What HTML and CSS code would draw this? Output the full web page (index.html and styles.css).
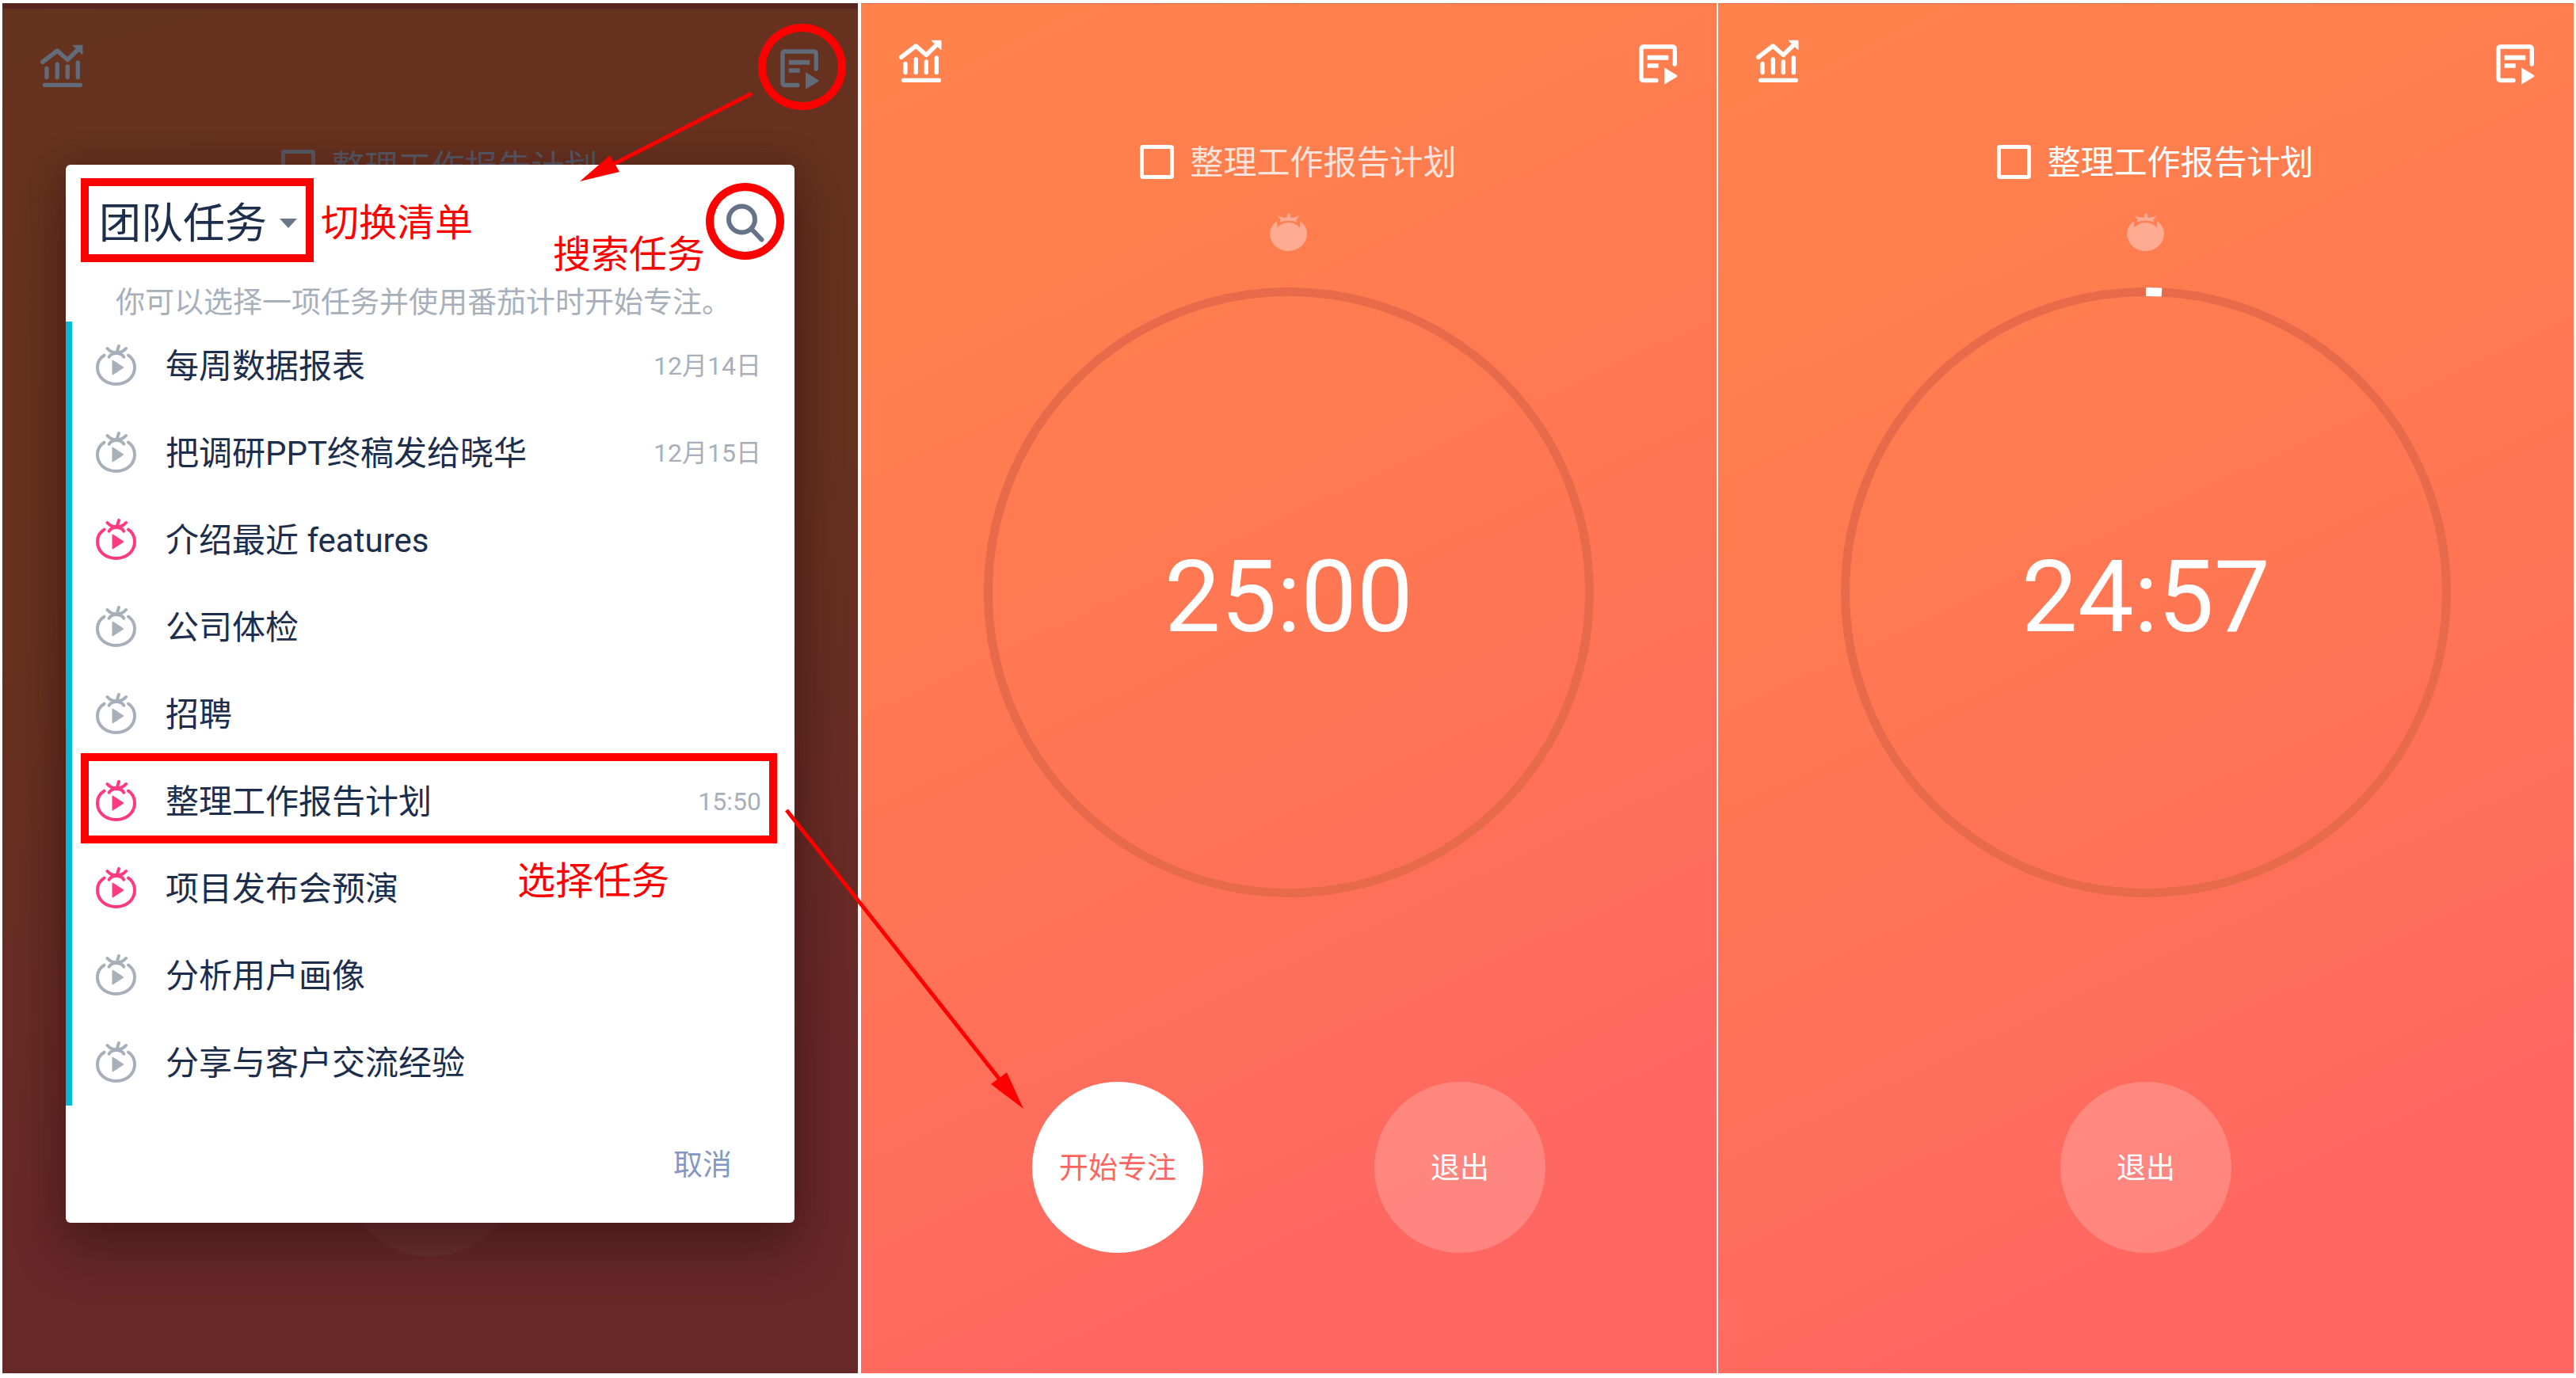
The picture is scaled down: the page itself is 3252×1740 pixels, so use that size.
FILE: index.html
```html
<!DOCTYPE html>
<html lang="zh-CN">
<head>
<meta charset="utf-8">
<meta name="viewport" content="width=device-width, initial-scale=1">
<title>番茄计时</title>
<link rel="stylesheet" href="styles.css">
</head>
<body>
<svg class="sprite" aria-hidden="true">
  <symbol id="i-chart" viewBox="0 0 64 64">
    <path d="M8.7 26.3 27.3 12 40.3 23.5 53 11" fill="none" stroke="currentColor" stroke-width="5.5" stroke-linecap="round" stroke-linejoin="round"/>
    <path d="M47 5.3h12V17z" fill="currentColor" stroke="currentColor" stroke-linejoin="round"/>
    <path d="M14 34.500v11M27.300 29v16.500M40.300 32v13.500M53.300 27v18.500M11.500 55.300h45" fill="none" stroke="currentColor" stroke-width="5.300" stroke-linecap="round"/>
  </symbol>
  <symbol id="i-tasks" viewBox="0 0 64 64">
    <path d="M53.300 35V16q0-3-3-3H14q-3 0-3 3v36.500q0 3 3 3h16" fill="none" stroke="currentColor" stroke-width="5.300" stroke-linecap="round"/>
    <path d="M18.700 23.700h26.600v6H18.700zM18.700 34.300h14v5.400h-14zM40 40.500q0-1.500 1.300-.6l14.700 9.200q1 .9 0 1.800l-14.700 9.200q-1.300.9-1.300-.6z" fill="currentColor"/>
  </symbol>
  <symbol id="i-pomo" viewBox="0 0 52 52">
    <g fill="none" stroke="currentColor" stroke-width="4" stroke-linecap="round">
      <path d="M10.500 13.700C5 17 2 23 2 29c0 12 10 21 23.500 21S49 41 49 29c0-6-3-12-8-15.300"/>
      <path d="M14.500 5c3 3.500 6.500 5.200 11.500 5.200S35 8.500 38 5M29 2l-2.500 8M16.700 15.700C18.500 12.500 22 11 26 11s7.500 1.500 9.300 4.700"/>
    </g>
    <path d="M20.500 20.200q0-1.300 1.200-.5l13 8.500q1 .8 0 1.600l-13 8.500q-1.200.8-1.200-.5z" fill="currentColor"/>
  </symbol>
  <symbol id="i-tomato" viewBox="0 0 48 48">
    <path d="M9 9.300C3.500 13 .3 18.500.3 25 .3 37.500 11 47 23.500 47S47 37.500 47 25c0-6.500-3.200-12-9-15.700v8.200c-3.500-4-9-6.500-14.500-6.500S13 13.500 9.500 17.500z" fill="currentColor"/>
    <path d="M10 2c3 2 7 3 11.500 2.800L22.500 0H26l.5 4.800C30 5 34 4 37 2c-.8 2.500-2.300 4.500-4 5.800L35 11c-3.500-1.500-7.500-2.300-11.500-2.300S15.500 9.500 12 11l2-3.500C12.200 6 10.700 4.300 10 2z" fill="currentColor"/>
  </symbol>
  <symbol id="i-search" viewBox="0 0 48 50">
    <path d="M36 20a16.500 16.500 0 1 1-33 0 16.500 16.500 0 0 1 33 0zM31.500 32 44.500 45.500" fill="none" stroke="currentColor" stroke-width="6" stroke-linecap="round"/>
  </symbol>
</svg>

<main class="board">
  <section class="phone phone-dim">
    <header class="topbar">
      <button class="icon-btn" aria-label="统计"><svg class="icon"><use href="#i-chart"/></svg></button>
      <button class="icon-btn" aria-label="任务列表"><svg class="icon"><use href="#i-tasks"/></svg></button>
    </header>
    <label class="task"><input class="check" type="checkbox"><span class="task-text">整理工作报告计划</span></label>
    <div class="actions"><span class="halo"></span></div>

    <div class="dialog" role="dialog" aria-label="选择任务">
      <div class="dialog-head">
        <div class="list-pick">
          <select class="list-select" aria-label="清单"><option>团队任务</option></select>
          <span class="caret"></span>
        </div>
        <button class="search-btn" aria-label="搜索任务"><svg class="search-icon"><use href="#i-search"/></svg></button>
      </div>
      <p class="hint">你可以选择一项任务并使用番茄计时开始专注。</p>
      <ul class="rows">
        <li class="row"><svg class="pomo"><use href="#i-pomo"/></svg><span class="name">每周数据报表</span><time class="date">12月14日</time></li>
        <li class="row"><svg class="pomo"><use href="#i-pomo"/></svg><span class="name">把调研PPT终稿发给晓华</span><time class="date">12月15日</time></li>
        <li class="row"><svg class="pomo hot"><use href="#i-pomo"/></svg><span class="name">介绍最近 features</span></li>
        <li class="row"><svg class="pomo"><use href="#i-pomo"/></svg><span class="name">公司体检</span></li>
        <li class="row"><svg class="pomo"><use href="#i-pomo"/></svg><span class="name">招聘</span></li>
        <li class="row"><svg class="pomo hot"><use href="#i-pomo"/></svg><span class="name">整理工作报告计划</span><time class="date">15:50</time></li>
        <li class="row"><svg class="pomo hot"><use href="#i-pomo"/></svg><span class="name">项目发布会预演</span></li>
        <li class="row"><svg class="pomo"><use href="#i-pomo"/></svg><span class="name">分析用户画像</span></li>
        <li class="row"><svg class="pomo"><use href="#i-pomo"/></svg><span class="name">分享与客户交流经验</span></li>
      </ul>
      <div class="dialog-foot"><button class="cancel">取消</button></div>
    </div>
  </section>

  <section class="phone">
    <header class="topbar">
      <button class="icon-btn" aria-label="统计"><svg class="icon"><use href="#i-chart"/></svg></button>
      <button class="icon-btn" aria-label="任务列表"><svg class="icon"><use href="#i-tasks"/></svg></button>
    </header>
    <label class="task task-soft"><input class="check" type="checkbox"><span class="task-text">整理工作报告计划</span></label>
    <svg class="tomato"><use href="#i-tomato"/></svg>
    <div class="timer">
      <svg class="ring" viewBox="0 0 770 770"><circle class="track" cx="385" cy="385" r="379.500"/></svg>
      <span class="clock">25:00</span>
    </div>
    <div class="actions">
      <button class="round primary">开始专注</button>
      <button class="round">退出</button>
    </div>
  </section>

  <section class="phone">
    <header class="topbar">
      <button class="icon-btn" aria-label="统计"><svg class="icon"><use href="#i-chart"/></svg></button>
      <button class="icon-btn" aria-label="任务列表"><svg class="icon"><use href="#i-tasks"/></svg></button>
    </header>
    <label class="task"><input class="check" type="checkbox"><span class="task-text">整理工作报告计划</span></label>
    <svg class="tomato"><use href="#i-tomato"/></svg>
    <div class="timer">
      <svg class="ring" viewBox="0 0 770 770"><circle class="track" cx="385" cy="385" r="379.500"/><path class="elapsed" d="M385 5.500A379.500 379.500 0 0 1 405 6"/></svg>
      <span class="clock">24:57</span>
    </div>
    <div class="actions"><button class="round">退出</button></div>
  </section>

  <div class="notes">
    <span class="mark mark-list"></span>
    <span class="mark mark-row"></span>
    <span class="mark mark-round mark-search"></span>
    <span class="mark mark-round mark-tasks"></span>
    <span class="note note-list">切换清单</span>
    <span class="note note-search">搜索任务</span>
    <span class="note note-row">选择任务</span>
    <svg class="arrows" width="1400" height="1500" viewBox="0 0 1400 1500" aria-hidden="true">
      <path d="M949 118 775 207M993 1023l269 340" fill="none" stroke="#f00" stroke-width="5"/>
      <path d="m732 229 38-33 12 21zM1292 1400l-21-46-20 15z" fill="#f00"/>
    </svg>
  </div>
</main>
</body>
</html>
```
FILE: styles.css
```css
* { box-sizing: border-box; }

body {
  margin: 0;
  background: #fff;
  font-family: "Roboto", "Noto Sans CJK SC", sans-serif;
}

button, select, input {
  margin: 0;
  padding: 0;
  border: 0;
  background: none;
  color: inherit;
  font: inherit;
}

.sprite {
  position: absolute;
  width: 0;
  height: 0;
}

.board {
  position: relative;
  display: flex;
  min-height: 100vh;
  padding: 4px 3px 6px;
}

/* Phone screens */
.phone {
  position: relative;
  display: flex;
  flex: 1 1 0;
  flex-direction: column;
  align-items: center;
  margin-right: 2px;
  border-top: 1px solid #e8694a;
  background: linear-gradient(155deg, #ff824b 0%, #ff7d4f 25%, #ff7554 50%, #ff6c5e 72%, #ff6662 88%);
  color: #fff;
}

.phone:nth-of-type(3) { margin-right: 0; }

.phone-dim {
  margin-right: 4px;
  border-top: 7px solid #57241f;
  background: linear-gradient(165deg, #66331f 0%, #66311f 40%, #672828 80%);
  color: #626b79;
}

.topbar {
  display: flex;
  align-self: stretch;
  justify-content: space-between;
  padding: 41px 42px 0;
}

.icon-btn, .icon {
  display: block;
  width: 64px;
  height: 64px;
}

.task {
  display: flex;
  align-items: center;
  gap: 20px;
  margin-top: 64px;
  padding-left: 24px;
  font-size: 42px;
  line-height: 60px;
}

.task-text {
  height: 60px;
  padding-top: 2px;
}

.task-soft .task-text { color: #ffe3da; }
.phone-dim .task { color: #545b67; }

.check {
  width: 43px;
  height: 43px;
  border: 5px solid currentColor;
  border-radius: 4px;
  appearance: none;
}

.tomato {
  width: 48px;
  height: 48px;
  margin-top: 36px;
  color: #ffab92;
}

.timer {
  display: grid;
  place-items: center;
  width: 770px;
  margin-top: 45px;
}

.ring, .clock { grid-area: 1 / 1; }

.ring {
  display: block;
  width: 100%;
}

.track, .elapsed {
  fill: none;
  stroke: #e76b4b;
  stroke-width: 11px;
}

.elapsed { stroke: #fff; }

.clock {
  padding-top: 12px;
  font-size: 126px;
  line-height: 148px;
}

.actions {
  display: flex;
  align-self: stretch;
  justify-content: space-evenly;
  margin-top: auto;
  padding-bottom: 152px;
}

.phone-dim .actions { padding-bottom: 147px; }

.round, .halo {
  width: 216px;
  height: 216px;
  border-radius: 50%;
  background: rgba(255, 255, 255, .2);
  font-size: 37px;
  line-height: 50px;
}

.round { padding-top: 4px; }

.halo { background: rgba(255, 255, 255, .04); }

.round.primary {
  background: #fff;
  color: #ff6560;
}

/* Task picker dialog */
.dialog {
  position: absolute;
  top: 197px;
  right: 80px;
  left: 80px;
  border-radius: 6px;
  background: #fff;
  box-shadow: 0 0 40px rgba(60, 15, 20, .35), 0 36px 60px rgba(50, 20, 15, .45);
  color: #1c2e4c;
}

.dialog-head {
  display: flex;
  align-items: center;
  justify-content: space-between;
  height: 128px;
  padding: 20px 38px 0 42px;
}

.list-pick {
  display: flex;
  align-items: center;
  gap: 16px;
}

.list-select {
  height: 76px;
  padding-top: 2px;
  font-size: 53px;
  line-height: 74px;
  appearance: none;
}

.caret {
  border: 11px solid transparent;
  border-top: 12px solid #6b7686;
  border-bottom: 0;
}

.search-btn, .search-icon {
  display: block;
  width: 48px;
  height: 50px;
  color: #667286;
}

.hint {
  height: 50px;
  margin: 20px 0 0;
  padding: 2px 0 0 63px;
  color: #a7b0ba;
  font-size: 37px;
  line-height: 50px;
  white-space: nowrap;
}

.rows {
  margin: 0;
  padding: 0;
  border-left: 8px solid #00bcd4;
  list-style: none;
}

.row {
  display: flex;
  align-items: center;
  gap: 36px;
  height: 110px;
  padding: 0 42px 0 30px;
}

.pomo {
  flex: none;
  width: 52px;
  height: 52px;
  color: #a7b0ba;
}

.hot { color: #ff3a80; }

.name {
  flex: 1;
  padding-top: 4px;
  font-size: 42px;
  line-height: 60px;
}

.date {
  padding-top: 2px;
  color: #a7b0ba;
  font-size: 32px;
  line-height: 50px;
}

.dialog-foot {
  display: flex;
  align-items: center;
  justify-content: flex-end;
  height: 148px;
  padding-right: 79px;
}

.cancel {
  padding-top: 4px;
  color: #8697c2;
  font-size: 37px;
  line-height: 50px;
}

/* Tutorial marks drawn over the screens */
.notes {
  position: absolute;
  inset: 0;
  pointer-events: none;
}

.arrows {
  position: absolute;
  top: 0;
  left: 0;
}

.mark {
  position: absolute;
  border: 10px solid #f00;
}

.mark-round { border-radius: 50%; }
.mark-list { top: 225px; left: 102px; width: 294px; height: 106px; }
.mark-row { top: 951px; left: 102px; width: 879px; height: 114px; }
.mark-search { top: 231px; left: 891px; width: 99px; height: 97px; }
.mark-tasks { top: 30px; left: 957px; width: 111px; height: 109px; }

.note {
  position: absolute;
  color: #f00;
  font-size: 48px;
  line-height: 60px;
}

.note-list { top: 252px; left: 405px; }
.note-search { top: 292px; left: 698px; }
.note-row { top: 1083px; left: 653px; }
```
